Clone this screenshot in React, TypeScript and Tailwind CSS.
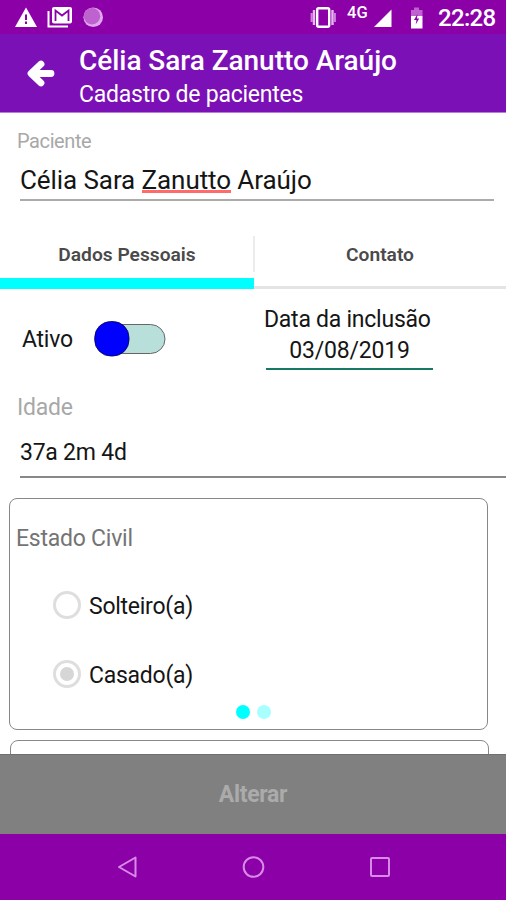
import { useState } from 'react';
import clsx from 'clsx';

const maritalOptions = ['Solteiro(a)', 'Casado(a)'];
const tabs = ['Dados Pessoais', 'Contato'];

function StatusBar() {
  return (
    <div className="flex h-[34px] items-center bg-[#8c00a8] text-white">
      <svg className="ml-[14px] h-[34px] w-[92px]" viewBox="0 0 92 34">
        <path d="M12 7.5 23 27H1Z" fill="currentColor" />
        <path d="M12 14.500v5.500M12 21.500v2.500" stroke="#8c00a8" strokeWidth="2" />
        <path d="M34.5 11v15.5H54" fill="none" stroke="currentColor" strokeWidth="2" />
        <rect x="38" y="7" width="20" height="16.5" rx="2" fill="currentColor" />
        <path d="M41.500 21V10.500l6.500 5 6.500-5V21" fill="none" stroke="#8c00a8" strokeWidth="1.800" />
        <circle cx="79.2" cy="17.3" r="9.8" fill="#e2a6ee" />
        <circle cx="78" cy="16.2" r="8.2" fill="#bd62cf" />
      </svg>
      <svg className="ml-auto h-[34px] w-[28px]" viewBox="0 0 28 34">
        <rect x="8.200" y="8.3" width="12" height="18.4" rx="1.5" fill="none" stroke="currentColor" strokeWidth="2.4" />
        <path d="M5 10v15M23.500 10v15" stroke="#e7b5f0" strokeWidth="2.4" />
        <path d="M2.700 13v9M25.800 13v9" stroke="#cf83dd" strokeWidth="2.200" />
      </svg>
      <span className="-mt-[7px] ml-[10px] w-[22px] text-[16.5px] leading-none font-medium whitespace-nowrap">4G</span>
      <svg className="ml-[5px] h-[34px] w-[20px]" viewBox="0 0 20 34">
        <path d="M0 27 17.500 9.500V27Z" fill="currentColor" />
      </svg>
      <svg className="ml-[15px] h-[34px] w-[16px]" viewBox="0 0 16 34">
        <path d="M2 10h3V7.500h5V10h3.500v6H2Z" fill="#bd62cf" />
        <path d="M2 16h11.500v12.500H2Z" fill="currentColor" />
        <path d="m8.500 14-3.500 6h2.500l-.8 4.500 3.500-6H8Z" fill="#8c00a8" />
      </svg>
      <span className="mr-[11px] ml-[13px] w-[57px] pt-[1px] text-[24px] leading-none font-medium tracking-[-0.7px] whitespace-nowrap">22:28</span>
    </div>
  );
}

function Header() {
  return (
    <header className="flex h-[79px] border-b border-[#b77bd8] bg-[#7b10b6] text-white">
      <svg className="mt-[24px] ml-[26px] h-[32px] w-[30px]" viewBox="0 0 30 32">
        <path d="M25 15.500H5.500M15 6 5 15.500 15 25" fill="none" stroke="currentColor" strokeWidth="6.800" strokeLinecap="round" strokeLinejoin="round" />
      </svg>
      <div className="ml-[23px] flex flex-col pt-[11px]">
        <h1 className="text-[28px] leading-[32px] font-medium tracking-[-0.04px] whitespace-nowrap">Célia Sara Zanutto Araújo</h1>
        <p className="mt-[4px] text-[23px] leading-[28px] tracking-[-0.24px] whitespace-nowrap">Cadastro de pacientes</p>
      </div>
    </header>
  );
}

function Switch({ label }: { label: string }) {
  return (
    <div className="flex h-[36px] items-center">
      <span className="w-[73px] pt-[2px] pl-[1px] text-[23px] leading-[28px] tracking-[-0.24px]">{label}</span>
      <svg className="h-[36px] w-[74px]" viewBox="0 0 74 36">
        <rect x="4" y="3.500" width="67" height="29" rx="14.500" fill="#b9dfda" stroke="#666" />
        <rect x=".7" y=".5" width="34.300" height="34.500" rx="16" fill="#0000ff" stroke="#00004d" strokeWidth=".8" />
      </svg>
    </div>
  );
}

function Radio({ label, checked, onSelect }: { label: string; checked: boolean; onSelect: () => void }) {
  return (
    <button type="button" onClick={onSelect} className="flex h-[28px] items-center gap-[8px]">
      <span className="flex size-[28px] items-center justify-center rounded-full border-3 border-[#dedede]">
        {checked && <span className="size-[14px] rounded-full bg-[#d6d6d6]" />}
      </span>
      <span className="pt-[4px] text-[23px] leading-[28px] tracking-[-0.26px]">{label}</span>
    </button>
  );
}

function NavBar() {
  return (
    <nav className="flex h-[66px] items-center justify-center gap-[98px] bg-[#8c00a8] text-[#d98ae8]">
      <svg className="size-[28px]" viewBox="0 0 28 28" fill="none" stroke="currentColor" strokeWidth="2">
        <path d="M6 14 22.500 4.500v19Z" strokeLinejoin="round" />
      </svg>
      <svg className="size-[28px]" viewBox="0 0 28 28" fill="none" stroke="currentColor" strokeWidth="2">
        <circle cx="14.500" cy="14" r="9.800" />
      </svg>
      <svg className="size-[28px]" viewBox="0 0 28 28" fill="none" stroke="currentColor" strokeWidth="2">
        <rect x="6" y="5" width="18" height="18" rx="1" />
      </svg>
    </nav>
  );
}

export default function App() {
  const [activeTab, setActiveTab] = useState(tabs[0]);
  const [marital, setMarital] = useState(maritalOptions[1]);

  return (
    <div className="flex h-[900px] w-[506px] flex-col overflow-hidden bg-white font-[Roboto,sans-serif] text-[#151515]">
      <StatusBar />
      <Header />

      <main className="h-[641px] overflow-hidden">
        <div className="pt-[16px] pl-[17px] text-[20px] leading-[24px] tracking-[-0.4px] text-[#a8a8a8]">Paciente</div>
        <div className="mr-[12px] ml-[20px] h-[48px] border-b-2 border-[#ababab] pt-[12px] text-[26px] leading-[30px] tracking-[-0.08px] whitespace-nowrap">
          Célia Sara <span className="inline-block h-[28px] border-b-3 border-[#ff6b6b] leading-[30px]">Zanutto</span> Araújo
        </div>

        <div className="mt-[35px] flex h-[53px]">
          {tabs.map((tab, i) => (
            <button
              key={tab}
              type="button"
              onClick={() => setActiveTab(tab)}
              className={clsx('flex flex-col justify-between', i > 0 ? 'relative w-[252px]' : 'w-[254px]')}
            >
              {i > 0 && <span className="absolute top-0 -left-px h-[36px] w-[2px] bg-[#ececec]" />}
              <span className="w-full pt-[6px] text-center text-[19.200px] leading-[26px] font-semibold text-[#4a4a4a]">{tab}</span>
              <span className={clsx('w-full', activeTab === tab ? 'h-[11px] bg-[#00ffff]' : 'h-[3px] bg-[#e4e4e4]')} />
            </button>
          ))}
        </div>

        <div className="flex h-[81px] pl-[21px]">
          <div className="w-[243px] pt-[32px]">
            <Switch label="Ativo" />
          </div>
          <div className="w-[169px] pt-[15px]">
            <div className="text-[23px] leading-[31px] tracking-[-0.25px] whitespace-nowrap">Data da inclusão</div>
            <div className="ml-[2px] h-[35px] border-b-[2.500px] border-[#147a63] text-center text-[23px] leading-[31px] tracking-[-0.2px]">03/08/2019</div>
          </div>
        </div>

        <div className="mt-[24px] pl-[17px] text-[23px] leading-[28px] tracking-[-0.24px] text-[#a8a8a8]">Idade</div>
        <div className="ml-[20px] h-[56px] border-b-2 border-[#888] pt-[17px] text-[23px] leading-[28px] tracking-[-0.24px]">37a 2m 4d</div>

        <section className="mt-[20px] ml-[9px] flex h-[232px] w-[479px] flex-col rounded-[8px] border-[1.500px] border-[#888]">
          <h2 className="pt-[26px] pl-[6px] text-[23px] leading-[28px] tracking-[-0.24px] text-[#747474]">Estado Civil</h2>
          <div className="flex flex-col gap-[41px] pt-[38px] pl-[43px]">
            {maritalOptions.map((option) => (
              <Radio key={option} label={option} checked={marital === option} onSelect={() => setMarital(option)} />
            ))}
          </div>
          <div className="mt-[17px] flex justify-center gap-[7px] pl-[10px]">
            <span className="size-[14px] rounded-full bg-[#00ffff]" />
            <span className="size-[14px] rounded-full bg-[#a8ffff]" />
          </div>
        </section>

        <section className="mt-[10px] ml-[10px] h-[60px] w-[479px] rounded-[8px] border-[1.500px] border-[#888]" />
      </main>

      <button type="button" className="h-[80px] border-t border-[#707070] bg-[#808080] pt-[2px] text-[23px] font-bold tracking-[-0.3px] text-[#ababab]">
        Alterar
      </button>
      <NavBar />
    </div>
  );
}
